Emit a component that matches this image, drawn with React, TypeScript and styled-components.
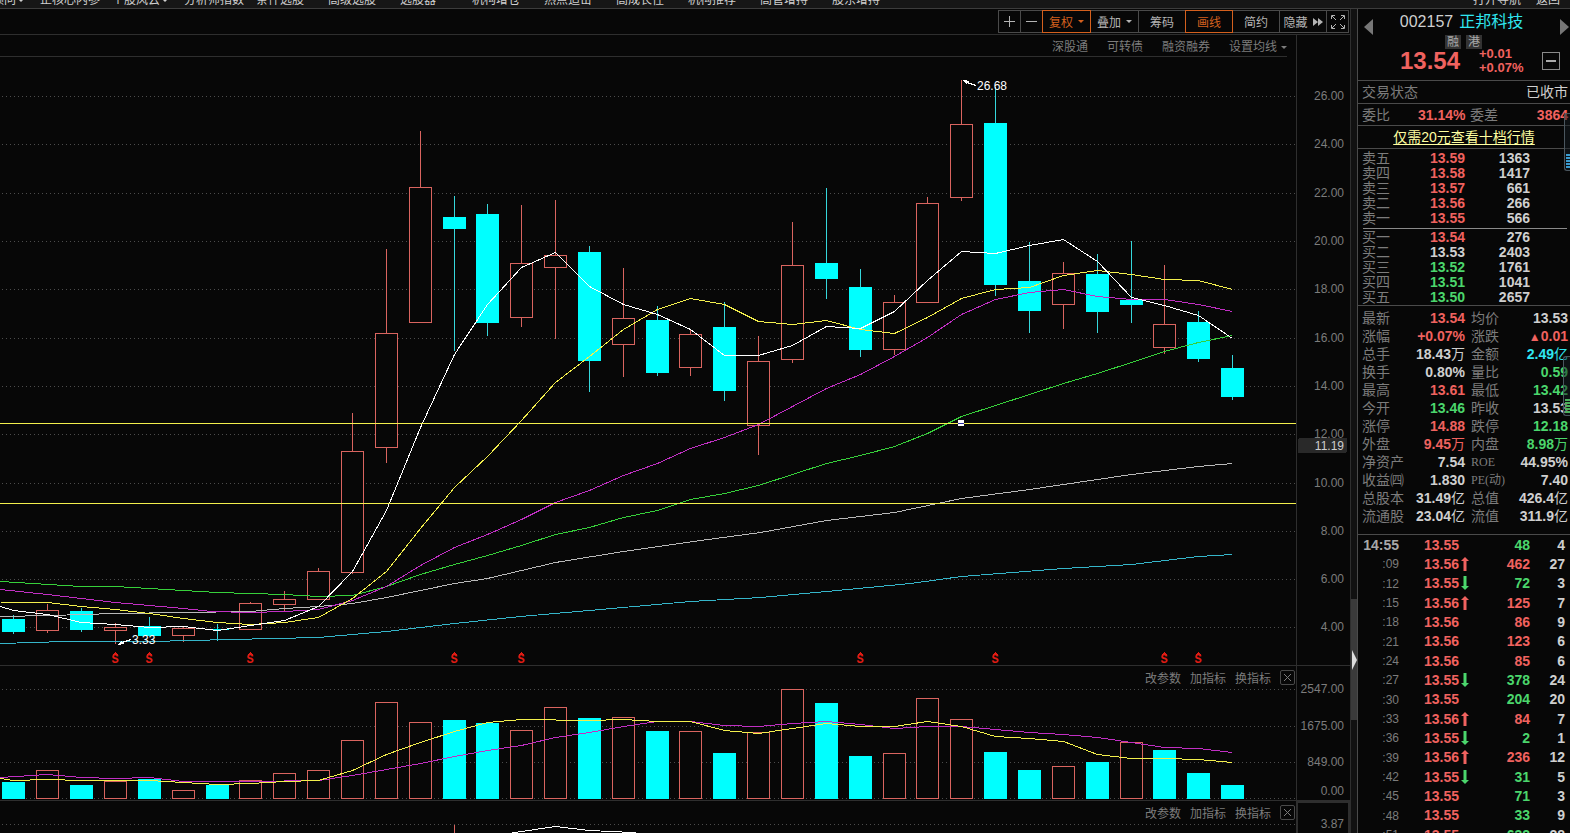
import React, { useLayoutEffect, useRef, useState } from "react";
import styled, { createGlobalStyle } from "styled-components";

const color = {
  bg: "#070707",
  line: "#2e2e2e",
  border: "#4a4a4a",
  label: "#7c7c7c",
  text: "#cfcfcf",
  red: "#f0625f",
  green: "#4bd66c",
  cyan: "#2fe6f0",
  orange: "#d4601e",
};

const GlobalStyle = createGlobalStyle`
  * { box-sizing: border-box; }
  body {
    margin: 0;
    background: ${color.bg};
    color: ${color.text};
    font-family: "Liberation Sans", "Noto Sans CJK SC", sans-serif;
    font-size: 12px;
  }
  button { font: inherit; color: inherit; background: none; border: 0; padding: 0; cursor: pointer; }
  table { border-collapse: collapse; border-spacing: 0; table-layout: fixed; width: 100%; }
  th, td { padding: 0; font-weight: 400; text-align: left; white-space: nowrap; }
`;

const Page = styled.div`
  display: flex;
  flex-direction: column;
  height: 100vh;
  overflow: hidden;
`;

/* ---------- menu ---------- */

const Menu = styled.nav`
  display: flex;
  align-items: flex-end;
  flex: none;
  height: 9px;
  overflow: hidden;
  background: #161616;
  border-bottom: 1px solid #3c3c3c;
`;

const MenuList = styled.div`
  display: flex;
  flex: 1;
  margin-left: -32px;
`;

const MenuItem = styled.button<{ $width?: number }>`
  display: flex;
  align-items: center;
  gap: 2px;
  flex: none;
  width: ${(p) => p.$width ?? 72}px;
  height: 16px;
  line-height: 16px;
  white-space: nowrap;
`;

/* ---------- workspace ---------- */

const Workspace = styled.div`
  display: grid;
  grid-template-columns: minmax(0, 1fr) 7px 213px;
  flex: 1;
  min-height: 0;
`;

const Charts = styled.main`
  display: flex;
  flex-direction: column;
  min-width: 0;
  overflow: hidden;
`;

const Toolbar = styled.div`
  display: flex;
  justify-content: flex-end;
  flex: none;
  height: 26px;
  padding: 1px 1px 0 0;
  border-bottom: 1px solid ${color.line};
`;

const ToolButton = styled.button<{ $width: number; $active?: boolean }>`
  display: flex;
  align-items: center;
  justify-content: center;
  gap: 5px;
  position: relative;
  z-index: ${(p) => (p.$active ? 1 : 0)};
  width: ${(p) => p.$width}px;
  height: 23px;
  margin-left: -1px;
  border: 1px solid ${(p) => (p.$active ? color.orange : color.border)};
  color: ${(p) => (p.$active ? color.orange : "#b4b4b4")};
  white-space: nowrap;
`;

const Caret = styled.i`
  border: 3px solid transparent;
  border-top-color: currentColor;
  border-bottom: 0;
`;

const PaneRow = styled.div<{ $ruled?: boolean }>`
  display: grid;
  grid-template-columns: minmax(0, 1fr) 54px;
  flex: none;
  border-bottom: ${(p) => (p.$ruled ? `1px solid ${color.line}` : "0")};
`;

const SubBar = styled.div`
  display: flex;
  justify-content: flex-end;
  align-items: flex-end;
  gap: 19px;
  height: 22px;
  margin-right: 9px;
  border-bottom: 1px solid ${color.line};
  color: ${color.label};
`;

const SubButton = styled.button`
  display: flex;
  align-items: center;
  gap: 4px;
  line-height: 18px;
`;

const Plot = styled.div`
  min-width: 0;
  overflow: hidden;
`;

const Axis = styled.div`
  border-left: 1px solid ${color.line};
`;

const BoxedAxis = styled(Axis)`
  border: 2px solid ${color.line};
  border-bottom: 0;
`;

const PaneHead = styled.div`
  display: flex;
  justify-content: flex-end;
  align-items: center;
  gap: 9px;
  height: 22px;
  padding-right: 1px;
  color: ${color.label};
`;

const CloseButton = styled.button`
  display: grid;
  place-items: center;
  width: 15px;
  height: 15px;
  border: 1px solid ${color.border};
  border-radius: 2px;
`;

const Svg = styled.svg`
  display: block;
  shape-rendering: crispEdges;
  font-size: 12px;
`;

const Dividend = styled.text`
  font: 700 12px "Liberation Mono", monospace;
`;

/* ---------- splitter ---------- */

const Splitter = styled.div`
  display: flex;
  justify-content: center;
  background: #111;
  border-left: 1px solid ${color.line};
  padding-top: 590px;
`;

const SplitHandle = styled.button`
  display: grid;
  place-items: center;
  width: 6px;
  height: 121px;
  background: #3a3a3a;
`;

/* ---------- quote panel ---------- */

const Side = styled.aside`
  position: relative;
  min-width: 0;
  border-left: 1px solid ${color.border};
  overflow: hidden;
`;

const Head = styled.header`
  display: grid;
  grid-template-columns: 10px 1fr 10px;
  align-items: start;
  height: 72px;
  padding: 0 1px 0 5px;
  border-bottom: 1px solid ${color.border};
`;

const StepButton = styled.button`
  display: block;
  height: 16px;
  margin-top: 10px;
`;

const StockName = styled.h1`
  display: flex;
  justify-content: center;
  gap: 6px;
  margin: 0 9px 0 0;
  font-size: 16px;
  font-weight: 400;
  line-height: 26px;
`;

const NameText = styled.span`
  color: ${color.cyan};
`;

const Tags = styled.div`
  display: flex;
  gap: 5px;
  height: 14px;
  margin: 0 0 0 72px;
`;

const Tag = styled.span`
  width: 16px;
  background: #333;
  color: #a8a8a8;
  line-height: 14px;
  text-align: center;
`;

const PriceLine = styled.div`
  display: grid;
  grid-template-columns: 79px 1fr 18px;
  align-items: center;
  height: 27px;
  margin: -2px -1px 0 27px;
  color: ${color.red};
`;

const Price = styled.strong`
  font-size: 24px;
  line-height: 26px;
`;

const Change = styled.span`
  display: grid;
  font-size: 13px;
  line-height: 14px;
  font-weight: 700;
`;

const Collapse = styled.button`
  display: grid;
  place-items: center;
  width: 18px;
  height: 18px;
  border: 1px solid #8a8a8a;
`;

const InfoRow = styled.div<{ $h?: number }>`
  display: grid;
  grid-template-columns: 56px 47px 5px 1fr;
  align-items: center;
  height: ${(p) => p.$h ?? 23}px;
  padding: 0 2px 0 4px;
  border-bottom: 1px solid ${color.border};
  font-size: 14px;
  line-height: 20px;
`;

const InfoPair = styled.span`
  display: flex;
  justify-content: space-between;
`;

const Label = styled.span`
  color: ${color.label};
`;

const Value = styled.span<{ $tone?: string; $span?: boolean; $bold?: boolean }>`
  color: ${(p) => p.$tone ?? color.text};
  grid-column: ${(p) => (p.$span ? "2 / -1" : "auto")};
  font-weight: ${(p) => (p.$bold ? 700 : 400)};
  text-align: right;
  white-space: nowrap;
`;

const Promo = styled.div`
  display: flex;
  justify-content: center;
  height: 23px;
  border-bottom: 1px solid ${color.border};
`;

const PromoLink = styled.a`
  color: #ffffa0;
  font-size: 14px;
  line-height: 22px;
  text-underline-offset: 2px;
`;

const Book = styled.table`
  font-size: 14px;
  line-height: 15px;
  tr { height: 15px; }
`;

const BookWrap = styled.section<{ $pad: string }>`
  padding: ${(p) => p.$pad};
  border-bottom: 1px solid ${color.border};
`;

const BookRule = styled.hr`
  height: 1px;
  margin: 2px 3px 1px 5px;
  border: 0;
  background: #8a8a8a;
`;

const Stats = styled.table`
  font-size: 14px;
  line-height: 16px;
  tr { height: 18px; }
`;

const Ticks = styled.table`
  font-size: 14px;
  line-height: 16px;
  tr { height: 19px; }
  tr:nth-child(3n) { height: 20px; }
`;

const RowHead = styled.th<{ $indent?: number; $latin?: boolean }>`
  && { padding-left: ${(p) => p.$indent ?? 4}px; }
  color: ${color.label};
  font-family: ${(p) => (p.$latin ? '"Liberation Serif", "Noto Sans CJK SC", serif' : "inherit")};
  font-size: ${(p) => (p.$latin ? "12px" : "inherit")};
`;

const Num = styled.td<{ $tone?: string; $end?: number; $plain?: boolean }>`
  && {
    text-align: right;
    font-weight: ${(p) => (p.$plain ? 400 : 700)};
    padding-right: ${(p) => p.$end ?? 0}px;
  }
  color: ${(p) => p.$tone ?? color.text};
`;

const ArrowCell = styled.td`
  && { padding-left: 2px; vertical-align: middle; }
`;

const ArrowIcon = styled.svg`
  display: block;
`;

const Unit = styled.span<{ $mark?: boolean }>`
  font-size: ${(p) => (p.$mark ? "12px" : "inherit")};
  line-height: ${(p) => (p.$mark ? "12px" : "inherit")};
  font-weight: 400;
`;

const Time = styled.time<{ $head?: boolean }>`
  color: ${(p) => (p.$head ? "#a8a8a8" : color.label)};
  font-size: ${(p) => (p.$head ? 14 : 12)}px;
  font-weight: ${(p) => (p.$head ? 700 : 400)};
`;

const Gauge = styled.div<{ $top: number; $height: number; $width: number; $fill: string }>`
  position: absolute;
  right: 0;
  top: ${(p) => p.$top}px;
  display: flex;
  align-items: flex-end;
  width: ${(p) => p.$width}px;
  height: ${(p) => p.$height}px;
  padding: 2px 0 2px 1px;
  border: 1px solid #4a565e;
  border-right: 0;
  border-radius: 3px 0 0 3px;
  background: rgba(20, 28, 34, 0.5);
  &::before {
    content: "";
    flex: 1;
    height: 14px;
    background: repeating-linear-gradient(${(p) => p.$fill} 0 2px, transparent 2px 3px);
  }
`;

/* ---------- data ---------- */

type Candle = [up: 0 | 1, top: number, bottom: number, high: number, low: number, volumeTop: number, volumeUp?: 0 | 1];

const candles: Candle[] = [
  [0, 619, 632, 615, 634, 782], [1, 610, 631, 604, 633, 770], [0, 611, 630, 608, 632, 785],
  [1, 627, 631, 623, 644, 781], [0, 626, 636, 617, 636, 779], [1, 628, 636, 627, 642, 790],
  [0, 629, 630, 624, 641, 785], [1, 603, 630, 602, 630, 780], [1, 599, 605, 591, 611, 773],
  [1, 571, 600, 568, 600, 770], [1, 451, 573, 413, 574, 740], [1, 333, 448, 249, 463, 702],
  [1, 187, 323, 131, 323, 722], [0, 217, 229, 196, 351, 720], [0, 214, 323, 204, 336, 723],
  [1, 263, 318, 205, 327, 730], [1, 255, 268, 200, 339, 707], [0, 252, 361, 246, 392, 718],
  [1, 318, 345, 268, 377, 717], [0, 320, 373, 306, 376, 731], [1, 334, 368, 330, 376, 731],
  [0, 327, 391, 302, 401, 753], [1, 361, 426, 336, 455, 732], [1, 265, 360, 222, 363, 689],
  [0, 263, 279, 188, 299, 703], [0, 287, 350, 269, 357, 756], [1, 302, 350, 295, 355, 753],
  [1, 203, 303, 197, 303, 698], [1, 124, 198, 80, 201, 719], [0, 123, 285, 87, 296, 752],
  [0, 281, 311, 242, 333, 770], [1, 273, 305, 262, 329, 766], [0, 274, 312, 254, 333, 762],
  [0, 300, 305, 241, 323, 742, 1], [1, 324, 348, 265, 354, 750, 0], [0, 322, 359, 311, 362, 773],
  [0, 368, 397, 355, 400, 785],
];

type Series = [stroke: string, points: string];

const priceLines: Series[] = [
  ["#35b5c9", "0,643 65,641 150,641 230,639 318,637 386,631 454,623 520,616 600,609 690,601 760,597 826,591 910,583 961,576 1063,568 1131,564 1198,556 1232,554"],
  ["#b9b9b9", "0,616 50,615 115,613 183,612 250,611 284,608 318,606 352,603 386,597 420,590 454,583 487,578 555,562 623,551 700,540 760,532 826,520 894,512 961,498 1029,489 1063,484 1131,474 1198,466 1232,463"],
  ["#36d03a", "0,581 81,586 115,586 149,588 217,592 250,593 284,594 318,596 352,595 386,586 420,574 454,564 487,555 521,545 555,534 589,527 623,517 657,510 690,499 724,493 758,485 792,474 826,463 860,455 894,446 927,433 961,416 995,405 1029,394 1063,383 1097,373 1131,362 1164,351 1198,342 1232,335"],
  ["#c12fc4", "0,589 47,594 81,598 115,602 149,605 183,608 211,611 250,612 284,611 318,609 352,600 386,586 420,565 454,547 487,534 521,519 555,502 589,490 623,475 657,463 690,448 724,437 758,424 792,406 826,388 860,374 894,356 927,337 961,314 995,299 1029,292 1063,289 1097,296 1131,299 1164,299 1198,304 1232,311"],
  ["#f3ef4c", "0,602 47,602 81,606 115,609 149,613 183,618 217,622 250,624 284,622 318,617 352,598 386,571 420,528 454,487 487,456 521,420 555,382 589,356 623,329 657,309 690,298 724,304 758,321 792,324 826,320 860,329 894,333 927,317 961,298 995,289 1029,287 1063,275 1097,270 1131,274 1164,279 1198,280 1232,289"],
  ["#ffffff", "0,606 13,610 47,614 81,622 115,624 149,627 183,626 217,630 250,625 284,620 318,606 352,571 386,510 420,427 454,354 487,304 521,267 555,252 589,286 623,304 657,314 690,329 724,355 758,355 792,345 826,326 860,328 894,311 927,280 961,251 995,253 1029,245 1063,239 1097,261 1131,297 1164,305 1198,315 1232,338"],
];

const volumeLines: Series[] = [
  ["#c12fc4", "0,777 47,774 81,777 115,778 149,777 183,781 250,781 318,780 352,775 386,769 420,763 454,756 487,750 521,745 555,737 589,732 623,726 657,721 690,721 724,725 758,726 792,723 826,721 860,724 894,728 927,726 961,726 995,729 1029,732 1063,734 1097,737 1131,742 1164,747 1198,748 1232,752"],
  ["#f3ef4c", "0,778 13,780 47,779 81,780 149,780 183,782 217,784 250,783 284,781 318,780 352,770 386,754 420,742 454,731 487,722 521,719 589,720 623,719 657,721 690,721 724,730 758,733 792,728 826,723 860,726 894,726 927,721 961,726 995,736 1029,738 1063,741 1097,754 1131,758 1164,758 1198,759 1232,762"],
];

const priceTicks: [number, string][] = [
  [96, "26.00"], [144, "24.00"], [193, "22.00"], [241, "20.00"], [289, "18.00"], [338, "16.00"],
  [386, "14.00"], [434, "12.00"], [483, "10.00"], [531, "8.00"], [579, "6.00"], [627, "4.00"],
];

const dividendDays = [3, 4, 7, 13, 15, 25, 29, 34, 35];

const BASE_WIDTH = 1296;

/* ---------- charts ---------- */

function useWidth() {
  const ref = useRef<HTMLDivElement>(null);
  const [width, setWidth] = useState(BASE_WIDTH);
  useLayoutEffect(() => {
    const node = ref.current;
    if (!node) return;
    const measure = () => setWidth(node.clientWidth || BASE_WIDTH);
    measure();
    const observer = new ResizeObserver(measure);
    observer.observe(node);
    return () => observer.disconnect();
  }, []);
  return [ref, width] as const;
}

const candleX = (i: number, k: number) => Math.floor((i * 33.85 + 13.96) * k);

const scalePoints = (points: string, k: number) =>
  points
    .split(" ")
    .map((p) => {
      const [x, y] = p.split(",").map(Number);
      return `${x * k + 0.5},${y + 0.5}`;
    })
    .join(" ");

function Lines({ series, k }: { series: Series[]; k: number }) {
  return (
    <>
      {series.map(([stroke, points]) => (
        <polyline key={stroke} points={scalePoints(points, k)} fill="none" stroke={stroke} />
      ))}
    </>
  );
}

function GridLine({ y, width }: { y: number; width: number }) {
  return <line x1={2} x2={width} y1={y + 0.5} y2={y + 0.5} stroke="#4c4c4c" strokeDasharray="1 3" />;
}

function Bar({ up, x, top, bottom }: { up: number; x: number; top: number; bottom: number }) {
  return up ? (
    <rect x={x - 10.5} y={top + 0.5} width={22} height={bottom - top - 1} fill={color.bg} stroke="#d9645f" />
  ) : (
    <rect x={x - 11} y={top} width={23} height={bottom - top} fill="#00ffff" />
  );
}

function PriceChart() {
  const [ref, width] = useWidth();
  const k = width / BASE_WIDTH;
  const peak = candleX(28, k);
  const dip = candleX(3, k);
  return (
    <Plot ref={ref}>
      <Svg width={width} height={608} viewBox={`0 57 ${width} 608`} role="img" aria-label="K线图">
        {priceTicks.map(([y]) => (
          <GridLine key={y} y={y} width={width} />
        ))}
        {candles.map(([up, top, bottom, high, low], i) => {
          const x = candleX(i, k);
          return (
            <g key={i}>
              <path d={`M${x + 0.5} ${high}V${low}`} stroke={up ? "#d9645f" : "#35d7dc"} />
              <Bar up={up} x={x} top={top} bottom={bottom} />
            </g>
          );
        })}
        <Lines series={priceLines} k={k} />
        <path d={`M0 423.5H${width}M0 503.5H${width}`} stroke="#f3ef4c" />
        <rect x={peak - 3} y={420} width={6} height={6} fill="#fff" />
        <path d={`M${peak - 3} 423.5h6`} stroke="#2a2aa0" />
        <path d={`M${peak + 15} 85.5l-9 -3`} stroke="#fff" />
        <path d={`M${peak + 2} 80l7 1l-4 3z`} fill="#fff" />
        <text x={peak + 16} y={90} fill="#fff">26.68</text>
        <path d={`M${dip + 16} 639.5l-9 3`} stroke="#fff" />
        <path d={`M${dip + 2} 645l7 -1l-3 -3z`} fill="#fff" />
        <text x={dip + 17} y={644} fill="#fff">3.33</text>
        {dividendDays.map((i) => {
          const x = candleX(i, k);
          return (
            <g key={i} fill="#e01c14">
              <path d={`M${x - 3} 655l3 -3l3 3z`} />
              <Dividend x={x} y={663} textAnchor="middle">S</Dividend>
            </g>
          );
        })}
      </Svg>
    </Plot>
  );
}

function PriceAxis() {
  return (
    <Svg width={53} height={608} viewBox="0 57 53 608" fill={color.label} textAnchor="end">
      {priceTicks.map(([y, label]) => (
        <text key={y} x={47} y={y + 4}>{label}</text>
      ))}
      <rect x={1} y={438} width={49} height={15} rx={2} fill="#292929" />
      <text x={47} y={450} fill={color.text}>11.19</text>
    </Svg>
  );
}

function VolumeChart() {
  const [ref, width] = useWidth();
  const k = width / BASE_WIDTH;
  return (
    <Plot ref={ref}>
      <Svg width={width} height={112} viewBox={`0 688 ${width} 112`} role="img" aria-label="成交量">
        {[689, 726, 762, 798].map((y) => (
          <GridLine key={y} y={y} width={width} />
        ))}
        {candles.map(([up, , , , , top, volumeUp = up], i) => (
          <Bar key={i} up={volumeUp} x={candleX(i, k)} top={top} bottom={799} />
        ))}
        <Lines series={volumeLines} k={k} />
      </Svg>
    </Plot>
  );
}

function IndicatorChart() {
  const [ref, width] = useWidth();
  const k = width / BASE_WIDTH;
  return (
    <Plot ref={ref}>
      <Svg width={width} height={112} viewBox={`0 823 ${width} 112`} role="img" aria-label="指标">
        <GridLine y={824} width={width} />
        <path d={`M${candleX(13, k) + 0.5} 825v20`} stroke="#d9645f" />
        <Lines series={[["#ffffff", "490,836 521,831 555,826 589,830 632,832 660,836"]]} k={k} />
      </Svg>
    </Plot>
  );
}

function IndicatorHead() {
  return (
    <PaneHead>
      <button>改参数</button>
      <button>加指标</button>
      <button>换指标</button>
      <CloseButton aria-label="关闭">
        <svg width="9" height="9" viewBox="0 0 9 9" stroke="#7c7c7c" fill="none">
          <path d="M1 1l7 7M8 1l-7 7" />
        </svg>
      </CloseButton>
    </PaneHead>
  );
}

/* ---------- quote panel data ---------- */

const R = color.red;
const G = color.green;
const W = color.text;

const asks = [
  ["卖五", "13.59", "1363", R], ["卖四", "13.58", "1417", R], ["卖三", "13.57", "661", R],
  ["卖二", "13.56", "266", R], ["卖一", "13.55", "566", R],
];

const bids = [
  ["买一", "13.54", "276", R], ["买二", "13.53", "2403", W], ["买三", "13.52", "1761", G],
  ["买四", "13.51", "1041", G], ["买五", "13.50", "2657", G],
];

const stats = [
  ["最新", "13.54", R, "均价", "13.53", W], ["涨幅", "+0.07%", R, "涨跌", "▲0.01", R],
  ["总手", "18.43万", W, "金额", "2.49亿", color.cyan], ["换手", "0.80%", W, "量比", "0.59", G],
  ["最高", "13.61", R, "最低", "13.42", G], ["今开", "13.46", G, "昨收", "13.53", W],
  ["涨停", "14.88", R, "跌停", "12.18", G], ["外盘", "9.45万", R, "内盘", "8.98万", G],
  ["净资产", "7.54", W, "ROE", "44.95%", W], ["收益㈣", "1.830", W, "PE(动)", "7.40", W],
  ["总股本", "31.49亿", W, "总值", "426.4亿", W], ["流通股", "23.04亿", W, "流值", "311.9亿", W],
];

type Trade = [time: string, price: string, dir: "" | "up" | "down", volume: string, tone: string, count: string];

const trades: Trade[] = [
  ["14:55", "13.55", "", "48", G, "4"], [":09", "13.56", "up", "462", R, "27"],
  [":12", "13.55", "down", "72", G, "3"], [":15", "13.56", "up", "125", R, "7"],
  [":18", "13.56", "", "86", R, "9"], [":21", "13.56", "", "123", R, "6"],
  [":24", "13.56", "", "85", R, "6"], [":27", "13.55", "down", "378", G, "24"],
  [":30", "13.55", "", "204", G, "20"], [":33", "13.56", "up", "84", R, "7"],
  [":36", "13.55", "down", "2", G, "1"], [":39", "13.56", "up", "236", R, "12"],
  [":42", "13.55", "down", "31", G, "5"], [":45", "13.55", "", "71", G, "3"],
  [":48", "13.55", "", "33", G, "9"], [":51", "13.55", "", "632", G, "28"],
];

function Figure({ text }: { text: string }) {
  return (
    <>
      {text.split(/([万亿▲])/).map((part, i) =>
        /[万亿▲]/.test(part) ? <Unit key={i} $mark={part === "▲"}>{part}</Unit> : part
      )}
    </>
  );
}

function OrderBook({ rows }: { rows: string[][] }) {
  return (
    <Book>
      <colgroup><col width={57} /><col width={50} /><col width={65} /><col /></colgroup>
      <tbody>
        {rows.map(([label, price, volume, tone]) => (
          <tr key={label}>
            <RowHead scope="row">{label}</RowHead>
            <Num $tone={tone}>{price}</Num>
            <Num>{volume}</Num>
            <td />
          </tr>
        ))}
      </tbody>
    </Book>
  );
}

function TradeArrow({ dir }: { dir: "up" | "down" }) {
  const up = dir === "up";
  return (
    <ArrowIcon width="8" height="14" viewBox="0 0 8 14" fill={up ? R : G}>
      <path d={up ? "M4 0L8 4H5.500V14H2.500V4H0z" : "M4 14L8 10H5.500V0H2.500V10H0z"} />
    </ArrowIcon>
  );
}

function QuotePanel() {
  return (
    <Side>
      <Head>
        <StepButton aria-label="上一只">
          <svg width="9" height="16" viewBox="0 0 9 16" fill="#777"><path d="M9 0V16L0 8z" /></svg>
        </StepButton>
        <div>
          <StockName>
            <span>002157</span>
            <NameText>正邦科技</NameText>
          </StockName>
          <Tags>
            <Tag>融</Tag>
            <Tag>港</Tag>
          </Tags>
          <PriceLine>
            <Price>13.54</Price>
            <Change>
              <span>+0.01</span>
              <span>+0.07%</span>
            </Change>
            <Collapse aria-label="收起">
              <svg width="10" height="2"><rect width="10" height="2" fill="#aaa" /></svg>
            </Collapse>
          </PriceLine>
        </div>
        <StepButton aria-label="下一只">
          <svg width="9" height="16" viewBox="0 0 9 16" fill="#777"><path d="M0 0V16L9 8z" /></svg>
        </StepButton>
      </Head>
      <InfoRow>
        <Label>交易状态</Label>
        <Value $span>已收市</Value>
      </InfoRow>
      <InfoRow $h={22}>
        <Label>委比</Label>
        <Value $tone={R} $bold>31.14%</Value>
        <span />
        <InfoPair>
          <Label>委差</Label>
          <Value $tone={R} $bold>3864</Value>
        </InfoPair>
      </InfoRow>
      <Promo>
        <PromoLink href="#">仅需20元查看十档行情</PromoLink>
      </Promo>
      <BookWrap $pad="2px 0 0">
        <OrderBook rows={asks} />
        <BookRule />
        <OrderBook rows={bids} />
      </BookWrap>
      <BookWrap $pad="3px 0 9px">
        <Stats>
          <colgroup><col width={50} /><col width={57} /><col width={49} /><col /></colgroup>
          <tbody>
            {stats.map(([a, av, at, b, bv, bt]) => (
              <tr key={a}>
                <RowHead scope="row">{a}</RowHead>
                <Num $tone={at}><Figure text={av} /></Num>
                <RowHead scope="row" $indent={6} $latin={/^[A-Z]/.test(b)}>{b}</RowHead>
                <Num $tone={bt} $end={2}><Figure text={bv} /></Num>
              </tr>
            ))}
          </tbody>
        </Stats>
      </BookWrap>
      <Ticks>
        <colgroup><col width={41} /><col width={60} /><col width={10} /><col width={61} /><col /></colgroup>
        <tbody>
          {trades.map(([time, price, dir, volume, tone, count]) => (
            <tr key={time}>
              <Num $plain><Time $head={time.length > 3}>{time}</Time></Num>
              <Num $tone={R}>{price}</Num>
              <ArrowCell>{dir && <TradeArrow dir={dir} />}</ArrowCell>
              <Num $tone={tone}>{volume}</Num>
              <Num $end={5}>{count}</Num>
            </tr>
          ))}
        </tbody>
      </Ticks>
      <Gauge $top={104} $height={58} $width={6} $fill="#3a9bd0" />
      <Gauge $top={347} $height={60} $width={7} $fill="#4bb05c" />
    </Side>
  );
}

const menuItems = ["投资顾问", "正核心内参", "个股风云", "分析师指数", "条件选股", "高级选股", "选股器", "机构增仓", "热点追击", "高成长性", "机构推荐", "高管增持", "股东增持"];
const menusWithList = ["投资顾问", "个股风云"];

export default function App() {
  return (
    <Page>
      <GlobalStyle />
      <Menu>
        <MenuList>
          {menuItems.map((item) => (
            <MenuItem key={item}>
              {item}
              {menusWithList.includes(item) && <Caret />}
            </MenuItem>
          ))}
        </MenuList>
        <MenuItem $width={63}>打开导航</MenuItem>
        <MenuItem $width={34}>返回</MenuItem>
      </Menu>
      <Workspace>
        <Charts>
          <Toolbar>
            <ToolButton $width={23} aria-label="放大">
              <svg width="12" height="12" stroke="currentColor"><path d="M0 5.500h11M5.500 0v11" /></svg>
            </ToolButton>
            <ToolButton $width={23} aria-label="缩小">
              <svg width="12" height="12" stroke="currentColor"><path d="M0 5.500h11" /></svg>
            </ToolButton>
            <ToolButton $width={49} $active>复权<Caret /></ToolButton>
            <ToolButton $width={49}>叠加<Caret /></ToolButton>
            <ToolButton $width={48}>筹码</ToolButton>
            <ToolButton $width={48} $active>画线</ToolButton>
            <ToolButton $width={48}>简约</ToolButton>
            <ToolButton $width={48}>
              隐藏
              <svg width="10" height="8" viewBox="0 0 10 8" fill="currentColor"><path d="M0 0l5 4l-5 4zM5 0l5 4l-5 4z" /></svg>
            </ToolButton>
            <ToolButton $width={23} aria-label="全屏">
              <svg width="14" height="14" viewBox="0 0 14 14" fill="none" stroke="currentColor">
                <path d="M.5 4V.5H4M10 .5h3.500V4M13.500 10v3.500H10M4 13.500H.5V10M1 1l4 4M13 1L9 5M13 13L9 9M1 13l4-4" />
              </svg>
            </ToolButton>
          </Toolbar>
          <PaneRow>
            <SubBar>
              <SubButton>深股通</SubButton>
              <SubButton>可转债</SubButton>
              <SubButton>融资融券</SubButton>
              <SubButton>设置均线<Caret /></SubButton>
            </SubBar>
            <Axis />
          </PaneRow>
          <PaneRow $ruled>
            <PriceChart />
            <Axis><PriceAxis /></Axis>
          </PaneRow>
          <PaneRow $ruled>
            <div>
              <IndicatorHead />
              <VolumeChart />
            </div>
            <Axis>
              <Svg width={53} height={134} viewBox="0 666 53 134" fill={color.label} textAnchor="end">
                <text x={47} y={693}>2547.00</text>
                <text x={47} y={730}>1675.00</text>
                <text x={47} y={766}>849.00</text>
                <text x={47} y={795}>0.00</text>
              </Svg>
            </Axis>
          </PaneRow>
          <PaneRow>
            <div>
              <IndicatorHead />
              <IndicatorChart />
            </div>
            <BoxedAxis>
              <Svg width={50} height={134} viewBox="1 803 50 134" fill={color.label} textAnchor="end">
                <text x={47} y={828}>3.87</text>
              </Svg>
            </BoxedAxis>
          </PaneRow>
        </Charts>
        <Splitter>
          <SplitHandle aria-label="收起侧栏">
            <svg width="5" height="20" viewBox="0 0 5 20" fill="#ddd"><path d="M0 0L5 10L0 20z" /></svg>
          </SplitHandle>
        </Splitter>
        <QuotePanel />
      </Workspace>
    </Page>
  );
}
